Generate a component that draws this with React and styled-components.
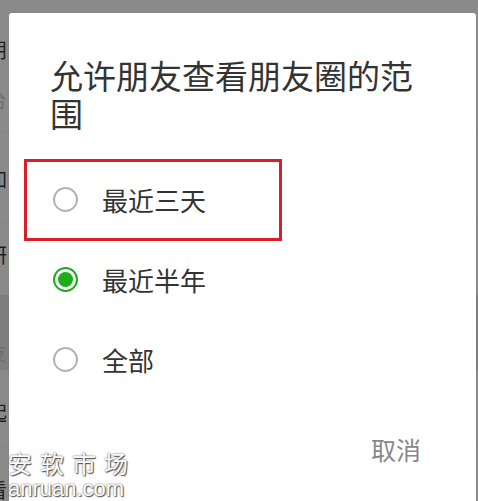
import React, { useState } from "react";
import styled, { createGlobalStyle } from "styled-components";

const GlobalStyle = createGlobalStyle`
  html, body {
    margin: 0;
    padding: 0;
    height: 100%;
    overflow: hidden;
  }
  body {
    font-family: "Noto Sans CJK SC", "Noto Sans", sans-serif;
    background: #8a8a8a;
  }
`;

const Screen = styled.div`
  position: relative;
  width: 478px;
  height: 501px;
  overflow: hidden;
  background: #8a8a8a;
`;

// the page behind the dimmed overlay
const Page = styled.div`
  display: flex;
  flex-direction: column;
`;

const PageRow = styled.div`
  height: ${(p) => p.$h}px;
  box-sizing: border-box;
  padding-top: ${(p) => p.$top}px;
  background: ${(p) => (p.$band ? "#7e7e7e" : "transparent")};
  border-bottom: 1px solid ${(p) => (p.$line ? "#838383" : "transparent")};
  display: flex;
  flex-direction: column;
  gap: ${(p) => p.$gap || 0}px;
`;

const PageText = styled.span`
  margin-left: -13px;
  font-size: 20px;
  line-height: 20px;
  color: ${(p) => (p.$light ? "#6f6f6f" : "#1e1e1e")};
`;

const Dialog = styled.div`
  position: absolute;
  top: 13px;
  left: 9px;
  right: 2px;
  bottom: -40px;
  background: #fff;
  border-radius: 3px;
  display: flex;
  flex-direction: column;
  padding: 43px 0 0;
  box-sizing: border-box;
`;

const Title = styled.h1`
  margin: 0 58px 0 41px;
  font-size: 33px;
  line-height: 38px;
  font-weight: 400;
  color: #333;
`;

const Options = styled.div`
  display: flex;
  flex-direction: column;
  margin-top: 27px;
`;

const Option = styled.label`
  position: relative;
  height: 80px;
  display: flex;
  align-items: center;
  padding-left: 44px;
  gap: 24px;
  cursor: pointer;

  &::after {
    content: "";
    display: ${(p) => (p.$marked ? "block" : "none")};
    position: absolute;
    left: 15px;
    top: 0;
    width: 258px;
    height: 82px;
    box-sizing: border-box;
    border: 3px solid #d8202b;
  }
`;

const Radio = styled.span`
  width: 25px;
  height: 25px;
  box-sizing: border-box;
  border-radius: 50%;
  border: 2px solid ${(p) => (p.$checked ? "#1aad19" : "#b3b3b3")};
  display: flex;
  align-items: center;
  justify-content: center;
  flex-shrink: 0;

  &::before {
    content: "";
    display: ${(p) => (p.$checked ? "block" : "none")};
    width: 15px;
    height: 15px;
    border-radius: 50%;
    background: #1aad19;
  }
`;

const OptionText = styled.span`
  font-size: 26px;
  color: #333;
`;

const Footer = styled.div`
  display: flex;
  justify-content: flex-end;
  padding: 24px 43px 0 0;
`;

const TextButton = styled.button`
  border: none;
  background: none;
  padding: 8px 12px;
  font-family: inherit;
  font-size: 25px;
  color: #888;
  cursor: pointer;
`;

const Watermark = styled.div`
  position: absolute;
  left: 8px;
  bottom: 1px;
  display: flex;
  flex-direction: column;
  color: #fff;
  text-shadow: 0 0 2px #444, 1px 1px 1px #555;
  pointer-events: none;
`;

const MarkName = styled.span`
  font-size: 24px;
  line-height: 30px;
  letter-spacing: 8px;
`;

const MarkSite = styled.span`
  font-family: "Liberation Sans", Arial, sans-serif;
  font-size: 22px;
  line-height: 22px;
`;

const choices = ["最近三天", "最近半年", "全部"];

export default function App() {
  const [value, setValue] = useState("最近半年");

  return (
    <Screen>
      <GlobalStyle />
      <Page>
        <PageRow $h={133} $top={40} $gap={30} $line>
          <PageText>朋</PageText>
          <PageText $light>台</PageText>
        </PageRow>
        <PageRow $h={90} $top={36} $line>
          <PageText>加</PageText>
        </PageRow>
        <PageRow $h={72} $top={22}>
          <PageText>研</PageText>
        </PageRow>
        <PageRow $h={75} $top={48} $band>
          <PageText $light>友</PageText>
        </PageRow>
        <PageRow $h={77} $top={33} $line>
          <PageText>起</PageText>
        </PageRow>
        <PageRow $h={60} $top={33}>
          <PageText>看</PageText>
        </PageRow>
      </Page>

      <Dialog>
        <Title>允许朋友查看朋友圈的范围</Title>
        <Options>
          {choices.map((c, i) => (
            <Option key={c} $marked={i === 0} onClick={() => setValue(c)}>
              <Radio $checked={value === c} />
              <OptionText>{c}</OptionText>
            </Option>
          ))}
        </Options>
        <Footer>
          <TextButton>取消</TextButton>
        </Footer>
      </Dialog>

      <Watermark>
        <MarkName>安软市场</MarkName>
        <MarkSite>anruan.com</MarkSite>
      </Watermark>
    </Screen>
  );
}
